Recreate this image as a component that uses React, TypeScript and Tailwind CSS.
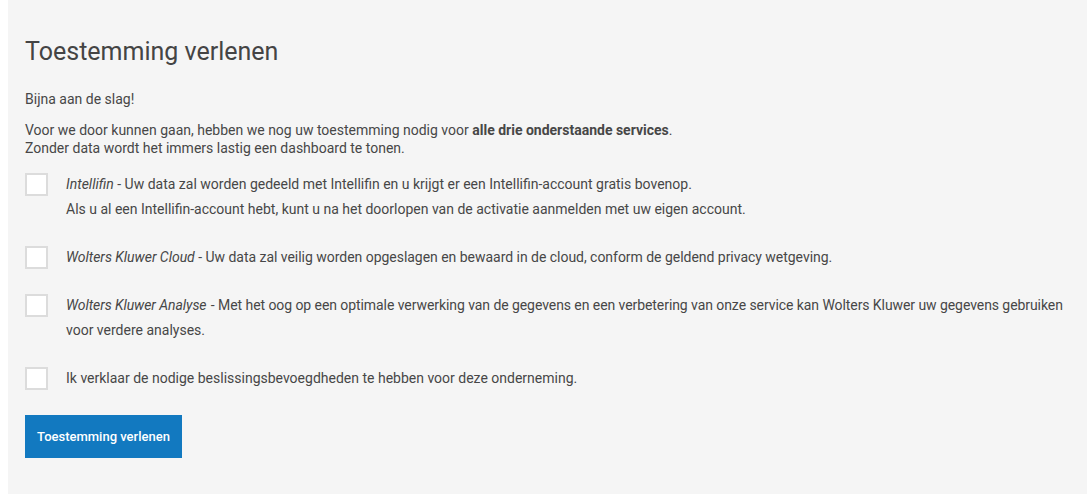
import React from "react";

function Box() {
  return <div className="mt-px h-[23px] w-[23px] shrink-0 border-2 border-[#dcdcdc] bg-white" />;
}

function Item({ children }: { children: React.ReactNode }) {
  return (
    <div className="flex items-start gap-[18px]">
      <Box />
      <div className="text-[14px] leading-[25px]">{children}</div>
    </div>
  );
}

export default function App() {
  return (
    <div className="min-h-[504px] bg-white pl-2 pr-1 text-[#474747]" style={{ fontFamily: "Roboto, 'Open Sans', sans-serif" }}>
      <div className="bg-[#f5f5f5] pl-[17px] pr-[6px] pt-[36px] pb-[36px]">
        <h1 className="text-[25px] leading-[32px] font-normal text-[#444]">Toestemming verlenen</h1>
        <p className="mt-[22px] text-[14px] leading-[18px]">Bijna aan de slag!</p>
        <p className="mt-[13px] text-[14px] leading-[18px]">
          Voor we door kunnen gaan, hebben we nog uw toestemming nodig voor <b className="font-bold">alle drie onderstaande services</b>.
          <br />
          Zonder data wordt het immers lastig een dashboard te tonen.
        </p>
        <div className="mt-[15px] flex flex-col gap-[23px]">
          <Item>
            <i>Intellifin</i> - Uw data zal worden gedeeld met Intellifin en u krijgt er een Intellifin-account gratis bovenop.
            <br />
            Als u al een Intellifin-account hebt, kunt u na het doorlopen van de activatie aanmelden met uw eigen account.
          </Item>
          <Item>
            <span className="tracking-[-0.03px]">
              <i>Wolters Kluwer Cloud</i> - Uw data zal veilig worden opgeslagen en bewaard in de cloud, conform de geldend privacy wetgeving.
            </span>
          </Item>
          <Item>
            <span className="whitespace-nowrap tracking-[-0.07px]">
              <i className="pr-px">Wolters Kluwer Analyse</i> - Met het oog op een optimale verwerking van de gegevens en een verbetering van onze service kan Wolters Kluwer uw gegevens gebruiken
            </span>
            <br />
            voor verdere analyses.
          </Item>
          <Item>Ik verklaar de nodige beslissingsbevoegdheden te hebben voor deze onderneming.</Item>
        </div>
        <button className="mt-[24px] h-[43px] w-[157px] bg-[#1279c0] text-[13px] font-medium text-white">
          Toestemming verlenen
        </button>
      </div>
    </div>
  );
}
